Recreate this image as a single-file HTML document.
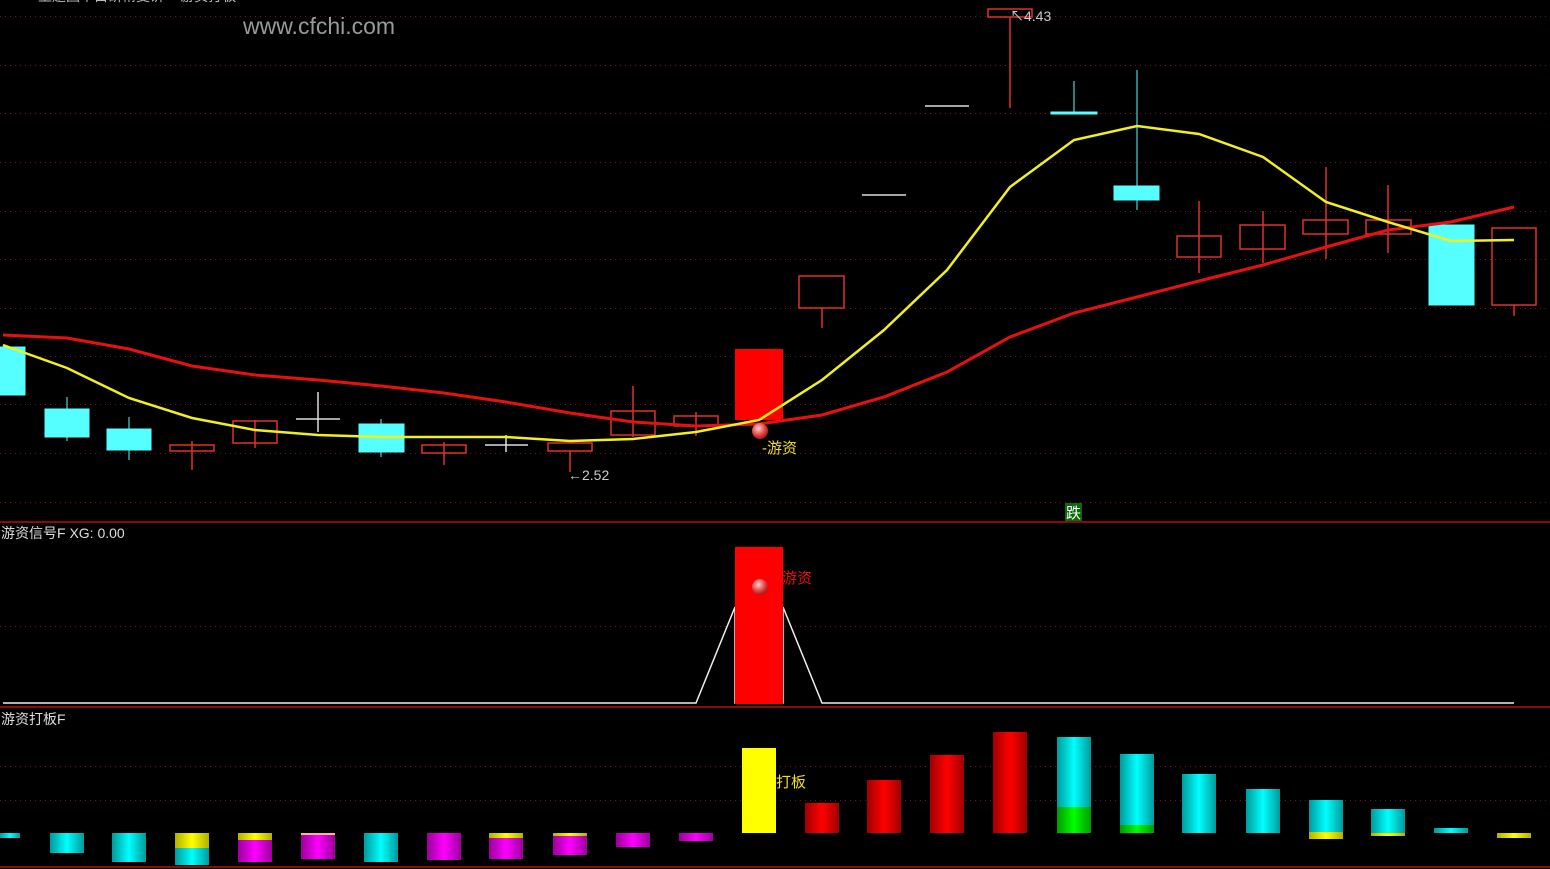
<!DOCTYPE html>
<html><head><meta charset="utf-8"><style>
html,body{margin:0;padding:0;background:#000;width:1550px;height:869px;overflow:hidden}
svg{display:block}
text{font-family:"Liberation Sans","Noto Sans CJK SC",sans-serif}
</style></head><body>
<svg width="1550" height="869" viewBox="0 0 1550 869" xmlns="http://www.w3.org/2000/svg">
<defs>
<linearGradient id="gc" x1="0" x2="1"><stop offset="0" stop-color="#009a9a"/><stop offset=".5" stop-color="#00ffff"/><stop offset="1" stop-color="#009a9a"/></linearGradient>
<linearGradient id="gr" x1="0" x2="1"><stop offset="0" stop-color="#a00000"/><stop offset=".5" stop-color="#ff0000"/><stop offset="1" stop-color="#a00000"/></linearGradient>
<linearGradient id="gm" x1="0" x2="1"><stop offset="0" stop-color="#9a009a"/><stop offset=".5" stop-color="#ff00ff"/><stop offset="1" stop-color="#9a009a"/></linearGradient>
<linearGradient id="gy" x1="0" x2="1"><stop offset="0" stop-color="#b0b000"/><stop offset=".5" stop-color="#ffff00"/><stop offset="1" stop-color="#b0b000"/></linearGradient>
<linearGradient id="gg" x1="0" x2="1"><stop offset="0" stop-color="#009a00"/><stop offset=".5" stop-color="#00ff00"/><stop offset="1" stop-color="#009a00"/></linearGradient>
<radialGradient id="ball" cx=".4" cy=".35" r=".7"><stop offset="0" stop-color="#ffd0d0"/><stop offset=".6" stop-color="#e04040"/><stop offset="1" stop-color="#a01010"/></radialGradient>
</defs>
<g stroke="#7a1010" stroke-width="1" stroke-dasharray="1 4">
<line x1="0" y1="16.5" x2="1550" y2="16.5"/><line x1="0" y1="65.5" x2="1550" y2="65.5"/>
<line x1="0" y1="113.5" x2="1550" y2="113.5"/><line x1="0" y1="162.5" x2="1550" y2="162.5"/>
<line x1="0" y1="211.5" x2="1550" y2="211.5"/><line x1="0" y1="259.5" x2="1550" y2="259.5"/>
<line x1="0" y1="308.5" x2="1550" y2="308.5"/><line x1="0" y1="356.5" x2="1550" y2="356.5"/>
<line x1="0" y1="404.5" x2="1550" y2="404.5"/><line x1="0" y1="453.5" x2="1550" y2="453.5"/>
<line x1="0" y1="502.5" x2="1550" y2="502.5"/>
<line x1="0" y1="626.5" x2="1550" y2="626.5"/>
<line x1="0" y1="766.5" x2="1550" y2="766.5"/><line x1="0" y1="800.5" x2="1550" y2="800.5"/>
</g>
<g stroke="#8a0a0a" stroke-width="2"><line x1="0" y1="522" x2="1550" y2="522"/><line x1="0" y1="707" x2="1550" y2="707"/><line x1="0" y1="867" x2="1550" y2="867"/></g>
<text x="38" y="1" fill="#bbb" font-size="14">主题图个白研精变讲 ● 游资打板</text>
<text x="243" y="34" fill="#9a9a9a" font-size="23">www.cfchi.com</text>
<g fill="#55ffff" stroke="#55ffff" stroke-width="1">
<rect x="0" y="347" width="25" height="48"/>
<line x1="67" y1="397" x2="67" y2="441"/><rect x="45" y="409" width="44" height="28"/>
<line x1="129" y1="417" x2="129" y2="460"/><rect x="107" y="429" width="44" height="21"/>
<line x1="381" y1="419" x2="381" y2="457"/><rect x="359" y="424" width="45" height="28"/>
<line x1="1074" y1="81" x2="1074" y2="112"/><rect x="1051" y="112" width="46" height="2"/>
<line x1="1137" y1="70" x2="1137" y2="210"/><rect x="1114" y="186" width="45" height="14"/>
<rect x="1429" y="225" width="45" height="80"/>
</g>
<g fill="none" stroke="#e03030" stroke-width="1.5">
<line x1="192" y1="441" x2="192" y2="470"/><rect x="170" y="445" width="44" height="6"/>
<line x1="255" y1="420" x2="255" y2="448"/><rect x="233" y="421" width="44" height="22"/>
<line x1="444" y1="442" x2="444" y2="465"/><rect x="422" y="445" width="44" height="8"/>
<line x1="570" y1="451" x2="570" y2="472"/><rect x="548" y="443" width="44" height="8"/>
<line x1="633" y1="386" x2="633" y2="437"/><rect x="611" y="411" width="44" height="24"/>
<line x1="696" y1="412" x2="696" y2="436"/><rect x="674" y="416" width="44" height="10"/>
<line x1="822" y1="308" x2="822" y2="328"/><rect x="799" y="276" width="45" height="32"/>
<line x1="1010" y1="17" x2="1010" y2="108"/><rect x="988" y="9" width="44" height="8"/>
<line x1="1199" y1="201" x2="1199" y2="273"/><rect x="1177" y="236" width="44" height="21"/>
<line x1="1263" y1="211" x2="1263" y2="263"/><rect x="1240" y="225" width="45" height="24"/>
<line x1="1326" y1="167" x2="1326" y2="259"/><rect x="1303" y="220" width="45" height="14"/>
<line x1="1388" y1="185" x2="1388" y2="253"/><rect x="1366" y="220" width="45" height="14"/>
<line x1="1514" y1="305" x2="1514" y2="316"/><rect x="1492" y="228" width="44" height="77"/>
</g>
<rect x="735" y="349" width="48" height="71" fill="#ff0000"/>
<g stroke="#ddd" stroke-width="1.5">
<line x1="296" y1="419" x2="340" y2="419"/><line x1="318" y1="392" x2="318" y2="432"/>
<line x1="485" y1="445" x2="528" y2="445"/><line x1="506" y1="435" x2="506" y2="452"/>
<line x1="862" y1="195" x2="906" y2="195"/><line x1="925" y1="106" x2="969" y2="106"/>
</g>
<polyline fill="none" stroke="#e81010" stroke-width="3" points="3,335 67,338 129,349 192,366 255,375 318,380 381,386 444,393 506,402 570,413 633,422 696,426 759,424 822,415 884,397 947,372 1010,337 1074,313 1137,297 1199,281 1263,265 1326,247 1388,230 1451,222 1514,207"/>
<polyline fill="none" stroke="#f0f020" stroke-width="2.5" points="3,345 67,368 129,398 192,418 255,430 318,435 381,437 444,437 506,437 570,441 633,439 696,432 759,420 822,380 884,330 947,270 1010,187 1074,140 1137,126 1199,134 1263,157 1326,202 1388,222 1451,241 1514,240"/>
<text x="568" y="480" fill="#ccc" font-size="14">←2.52</text>
<text x="1010" y="21" fill="#ccc" font-size="14">↖4.43</text>
<circle cx="760" cy="431" r="8" fill="url(#ball)"/>
<text x="762" y="453" fill="#f0e020" font-size="15">-游资</text>
<rect x="1065" y="503" width="17" height="18" fill="#0a6a0a"/>
<text x="1066" y="518" fill="#fff" font-size="15">跌</text>
<text x="1" y="538" fill="#ddd" font-size="14">游资信号F  XG: 0.00</text>
<polyline fill="none" stroke="#eee" stroke-width="1.5" points="3,703 696,703 735,607 735,703 783,703 783,607 822,703 1514,703"/>
<rect x="735" y="547" width="48" height="157" fill="#ff0000"/>
<circle cx="760" cy="587" r="8" fill="url(#ball)"/>
<text x="782" y="583" fill="#e01010" font-size="15">游资</text>
<text x="1" y="724" fill="#ddd" font-size="14">游资打板F</text>
<g>
<rect x="0" y="833" width="20" height="5" fill="url(#gc)"/>
<rect x="50" y="833" width="34" height="20" fill="url(#gc)"/>
<rect x="112" y="833" width="34" height="29" fill="url(#gc)"/>
<rect x="175" y="833" width="34" height="15" fill="url(#gy)"/><rect x="175" y="848" width="34" height="17" fill="url(#gc)"/>
<rect x="238" y="833" width="34" height="7" fill="url(#gy)"/><rect x="238" y="840" width="34" height="22" fill="url(#gm)"/>
<rect x="301" y="833" width="34" height="2" fill="#f0c080"/><rect x="301" y="835" width="34" height="24" fill="url(#gm)"/>
<rect x="364" y="833" width="34" height="29" fill="url(#gc)"/>
<rect x="427" y="833" width="34" height="27" fill="url(#gm)"/>
<rect x="489" y="833" width="34" height="5" fill="url(#gy)"/><rect x="489" y="838" width="34" height="21" fill="url(#gm)"/>
<rect x="553" y="833" width="34" height="3" fill="url(#gy)"/><rect x="553" y="836" width="34" height="19" fill="url(#gm)"/>
<rect x="616" y="833" width="34" height="14" fill="url(#gm)"/>
<rect x="679" y="833" width="34" height="8" fill="url(#gm)"/>
<rect x="742" y="748" width="34" height="85" fill="#ffff00"/>
<rect x="805" y="803" width="34" height="30" fill="url(#gr)"/>
<rect x="867" y="780" width="34" height="53" fill="url(#gr)"/>
<rect x="930" y="755" width="34" height="78" fill="url(#gr)"/>
<rect x="993" y="732" width="34" height="101" fill="url(#gr)"/>
<rect x="1057" y="737" width="34" height="70" fill="url(#gc)"/><rect x="1057" y="807" width="34" height="26" fill="url(#gg)"/>
<rect x="1120" y="754" width="34" height="71" fill="url(#gc)"/><rect x="1120" y="825" width="34" height="8" fill="url(#gg)"/>
<rect x="1182" y="774" width="34" height="59" fill="url(#gc)"/>
<rect x="1246" y="789" width="34" height="44" fill="url(#gc)"/>
<rect x="1309" y="800" width="34" height="32" fill="url(#gc)"/><rect x="1309" y="832" width="34" height="7" fill="url(#gy)"/>
<rect x="1371" y="809" width="34" height="24" fill="url(#gc)"/><rect x="1371" y="833" width="34" height="3" fill="url(#gy)"/>
<rect x="1434" y="828" width="34" height="5" fill="url(#gc)"/>
<rect x="1497" y="833" width="34" height="5" fill="url(#gy)"/>
</g>
<text x="776" y="787" fill="#f0e020" font-size="15">打板</text>
</svg>
</body></html>
